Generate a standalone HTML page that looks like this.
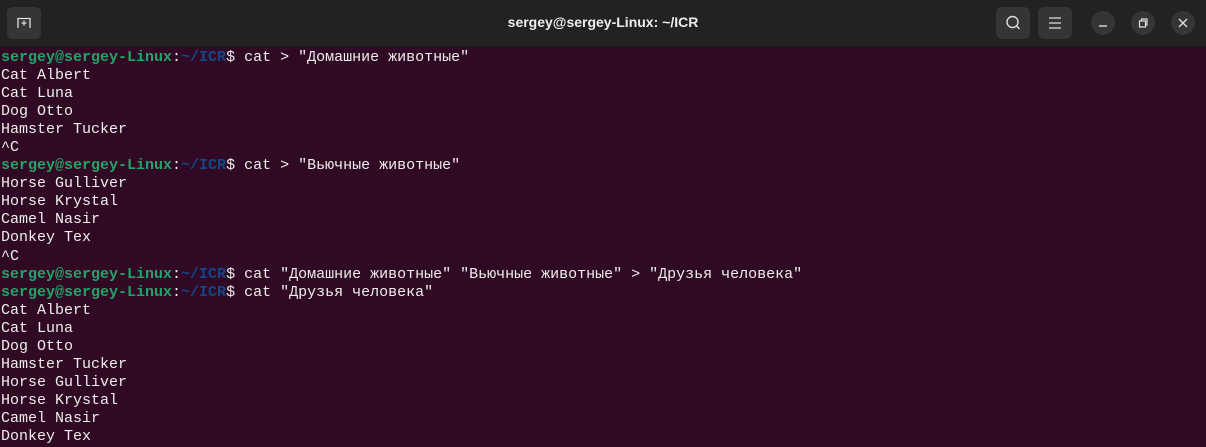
<!DOCTYPE html>
<html><head><meta charset="utf-8"><style>
body{margin:0;width:1206px;height:447px;background:#300a24;overflow:hidden;font-family:"Liberation Sans",sans-serif}
.hdr{position:absolute;left:0;top:0;width:1206px;height:46px;background:#222222;border-bottom:1px solid #1a1a1a}
.btn{position:absolute;top:7px;width:34px;height:32px;border-radius:6px;background:#353535}
.cir{position:absolute;top:11px;width:24px;height:24px;border-radius:50%;background:#353535}
.title{position:absolute;left:0;width:1206px;top:14px;text-align:center;color:#eee;font-weight:bold;font-size:14px}
pre{position:absolute;left:1px;top:49px;margin:0;font-family:"Liberation Mono","DejaVu Sans Mono",monospace;font-size:15px;line-height:18.05px;color:#eeeeec}
.g{color:#26a269;font-weight:bold}.b{color:#12488b;font-weight:bold}
</style></head><body>
<div class="hdr">
<div class="btn" style="left:7px"><svg width="34" height="32"><path d="M11 21V11.5h12V21M17 13.5v5M14.5 16h5" stroke="#ddd" stroke-width="1.3" fill="none"/></svg></div>
<div class="title">sergey@sergey-Linux: ~/ICR</div>
<div class="btn" style="left:996px"><svg width="34" height="32"><circle cx="16.5" cy="15" r="5.5" stroke="#ddd" stroke-width="1.4" fill="none"/><path d="M20.5 19l3 3" stroke="#ddd" stroke-width="1.5"/></svg></div>
<div class="btn" style="left:1038px"><svg width="34" height="32"><path d="M11 11h12M11 16h12M11 21h12" stroke="#ddd" stroke-width="1.3"/></svg></div>
<div class="cir" style="left:1091px"><svg width="24" height="24"><path d="M8 15h8" stroke="#ddd" stroke-width="1.4"/></svg></div>
<div class="cir" style="left:1131px"><svg width="24" height="24"><path d="M8.5 10h6v6h-6zM10.5 10V8h5.5v6h-1.5" stroke="#ddd" stroke-width="1.2" fill="none"/></svg></div>
<div class="cir" style="left:1171px"><svg width="24" height="24"><path d="M8 8l8 8M16 8l-8 8" stroke="#ddd" stroke-width="1.4"/></svg></div>
</div>
<pre><span class="g">sergey@sergey-Linux</span>:<span class="b">~/ICR</span>$ cat &gt; "Домашние животные"
Cat Albert
Cat Luna
Dog Otto
Hamster Tucker
^C
<span class="g">sergey@sergey-Linux</span>:<span class="b">~/ICR</span>$ cat &gt; "Вьючные животные"
Horse Gulliver
Horse Krystal
Camel Nasir
Donkey Tex
^C
<span class="g">sergey@sergey-Linux</span>:<span class="b">~/ICR</span>$ cat "Домашние животные" "Вьючные животные" &gt; "Друзья человека"
<span class="g">sergey@sergey-Linux</span>:<span class="b">~/ICR</span>$ cat "Друзья человека"
Cat Albert
Cat Luna
Dog Otto
Hamster Tucker
Horse Gulliver
Horse Krystal
Camel Nasir
Donkey Tex</pre>
</body></html>
